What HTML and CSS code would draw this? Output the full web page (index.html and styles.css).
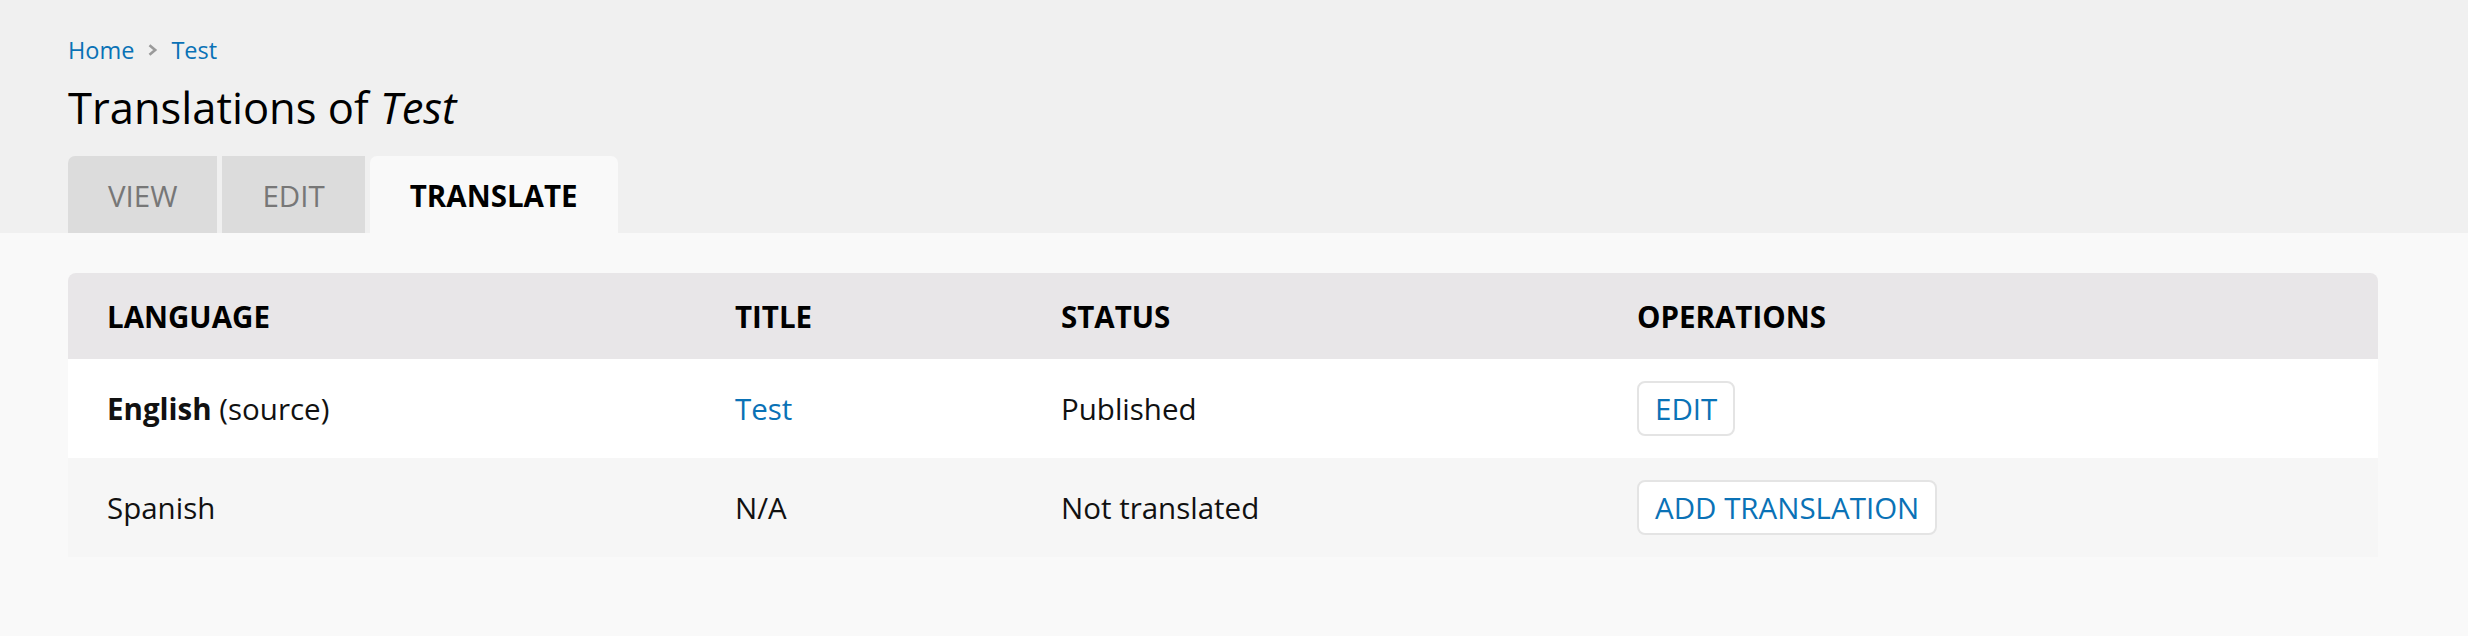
FILE: index.html
```html
<!DOCTYPE html>
<html lang="en">
<head>
  <meta charset="UTF-8" />
  <meta name="viewport" content="width=device-width, initial-scale=1.0"/>
  <title>Translations of Test</title>
  <link rel="stylesheet" href="styles.css">
</head>
<body>
  <header class="page-header">
    <nav class="breadcrumb">
      <a href="/">Home</a>
      <svg class="crumb-sep" width="11" height="12" viewBox="0 0 11 12">
        <path d="M2.5 1.2 L8.2 6 L2.5 10.8" fill="none" stroke="#9a9a9a" stroke-width="2.6"/>
      </svg>
      <a href="/node/1">Test</a>
    </nav>
    <h1>Translations of <em>Test</em></h1>
    <ul class="tabs">
      <li><a href="/node/1">View</a></li>
      <li><a href="/node/1/edit">Edit</a></li>
      <li class="active"><a href="/node/1/translations">Translate</a></li>
    </ul>
  </header>

  <main class="content">
    <table class="translations">
      <thead>
        <tr>
          <th class="col-lang">Language</th>
          <th class="col-title">Title</th>
          <th class="col-status">Status</th>
          <th>Operations</th>
        </tr>
      </thead>
      <tbody>
        <tr>
          <td><strong>English</strong> (source)</td>
          <td><a href="/node/1">Test</a></td>
          <td>Published</td>
          <td><a class="button" href="/node/1/edit">Edit</a></td>
        </tr>
        <tr class="even">
          <td>Spanish</td>
          <td>N/A</td>
          <td>Not translated</td>
          <td><a class="button" href="/es/node/1/translations/add/en/es">Add translation</a></td>
        </tr>
      </tbody>
    </table>
  </main>
</body>
</html>
```

FILE: styles.css
```css
body {
  margin: 0;
  padding: 0;
  font-family: "Open Sans", Arial, sans-serif;
  font-size: 29.5px;
  color: #111;
  background-color: #f9f9f9;
}

a {
  color: #0a72b6;
  text-decoration: none;
}

.page-header {
  background-color: #f0f0f0;
  padding: 34px 68px 0;
}

.breadcrumb {
  display: flex;
  align-items: center;
  gap: 13px;
  font-size: 23.5px;
  line-height: 32px;
}

.page-header h1 {
  margin: 14px 0 0;
  font-size: 43.5px;
  font-weight: normal;
  line-height: 56px;
  color: #000;
}

.tabs {
  display: flex;
  gap: 5px;
  list-style: none;
  margin: 20px 0 0;
  padding: 0;
}

.tabs li a {
  display: block;
  height: 77px;
  padding: 2px 40px 0;
  box-sizing: border-box;
  line-height: 75px;
  text-transform: uppercase;
  color: #777;
  background-color: #dcdcdc;
}

.tabs li:first-child a {
  border-top-left-radius: 7px;
}

.tabs li.active a {
  color: #000;
  font-weight: bold;
  background-color: #f9f9f9;
  border-radius: 7px 7px 0 0;
}

.content {
  padding: 40px 90px 80px 68px;
}

.translations {
  width: 100%;
  border-collapse: separate;
  border-spacing: 0;
}

.translations th {
  height: 86px;
  padding: 0 39px;
  text-align: left;
  text-transform: uppercase;
  font-weight: bold;
  color: #000;
  background-color: #e8e6e8;
}

.translations th:first-child {
  border-top-left-radius: 8px;
}

.translations th:last-child {
  border-top-right-radius: 8px;
}

.col-lang {
  width: 550px;
}

.col-title {
  width: 248px;
}

.col-status {
  width: 498px;
}

.translations td {
  height: 99px;
  padding: 0 39px;
  background-color: #fff;
}

.translations tr.even td {
  background-color: #f6f6f6;
}

.button {
  display: inline-block;
  height: 55px;
  padding: 0 16px;
  box-sizing: border-box;
  line-height: 51px;
  text-transform: uppercase;
  background-color: #fff;
  border: 2px solid #e4e4e4;
  border-radius: 8px;
}
```
